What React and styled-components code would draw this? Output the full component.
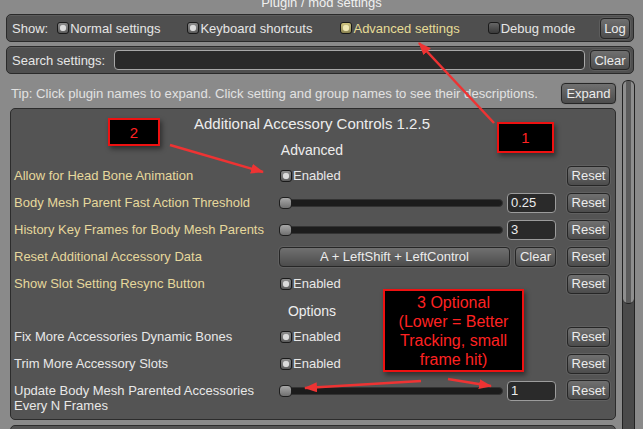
import React from "react";
import styled, { createGlobalStyle, css } from "styled-components";

const GlobalStyle = createGlobalStyle`
  html, body {
    margin: 0;
    padding: 0;
    background: #8a8a8a;
  }
  body {
    font-family: "Liberation Sans", Arial, sans-serif;
    font-size: 13px;
    color: #e6e6e6;
  }
  #root {
    width: 643px;
    height: 429px;
    overflow: hidden;
  }
`;

const Window = styled.div`
  position: relative;
  width: 643px;
  height: 429px;
  overflow: hidden;
  background: #8a8a8a;
  display: flex;
  flex-direction: column;
`;

const WindowTitle = styled.div`
  height: 14px;
  line-height: 14px;
  margin-top: -4px;
  text-align: center;
  color: #f0f0f0;
`;

const Bar = styled.div`
  height: 26px;
  margin: 4px 9px 0 6px;
  padding: 0 3px 0 5px;
  display: flex;
  align-items: center;
  background: #4f4f4f;
  border: 1px solid #2a2a2a;
  border-radius: 5px;
  box-shadow: inset 0 1px 0 #5c5c5c;
`;

const BarLabel = styled.span`
  margin-right: ${(p) => p.$gap || 0}px;
  white-space: nowrap;
`;

const ToggleItem = styled.label`
  display: flex;
  align-items: center;
  margin-right: ${(p) => p.$gap || 0}px;
  color: ${(p) => (p.$active ? "#e6dc96" : "#e6e6e6")};
  white-space: nowrap;
`;

const Toggle = styled.span`
  width: 10px;
  height: 10px;
  margin-right: 1px;
  border: 1px solid #1a1a1a;
  border-radius: 3px;
  display: flex;
  align-items: center;
  justify-content: center;
  background: linear-gradient(#8c8c8c, #5a5a5a);
  ${(p) =>
    p.$variant === "yellow" &&
    css`
      background: linear-gradient(#cfc37e, #8a8250);
    `}
  ${(p) =>
    p.$variant === "off" &&
    css`
      background: linear-gradient(#666, #3a3a3a);
    `}
  &::after {
    content: "";
    width: 6px;
    height: 6px;
    border-radius: 50%;
    display: ${(p) => (p.$variant === "off" ? "none" : "block")};
    background: ${(p) => (p.$variant === "yellow" ? "#f0e8b4" : "#dcdcdc")};
    box-shadow: 0 0 1px rgba(255, 255, 255, 0.6);
  }
`;

const Spacer = styled.div`
  flex: 1;
`;

const Button = styled.button`
  height: ${(p) => p.$h || 20}px;
  width: ${(p) => (p.$w ? `${p.$w}px` : "auto")};
  flex: ${(p) => (p.$grow ? 1 : "none")};
  padding: 0;
  font-family: "Liberation Sans", Arial, sans-serif;
  font-size: 13px;
  color: #ececec;
  background: linear-gradient(#707070, #4c4c4c);
  border: 1px solid #262626;
  border-radius: 4px;
  box-shadow: 0 0 0 1px rgba(120, 120, 120, 0.35);
  display: flex;
  align-items: center;
  justify-content: center;
`;

const SearchInput = styled.div`
  flex: 1;
  height: 18px;
  margin: 0 5px 0 9px;
  background: #2a2a2a;
  border: 1px solid #a8a8a8;
  border-radius: 4px;
`;

const Body = styled.div`
  flex: 1;
  min-height: 0;
  margin: 6px 8px 0 10px;
  display: flex;
  gap: 6px;
`;

const Content = styled.div`
  flex: 1;
  display: flex;
  flex-direction: column;
`;

const TipRow = styled.div`
  height: 21px;
  margin-top: 3px;
  padding-left: 1px;
  display: flex;
  align-items: center;
  justify-content: space-between;
  color: #e2e2e2;
  font-size: 13.15px;
`;

const Panel = styled.div`
  margin-top: ${(p) => p.$top || 4}px;
  padding: 7px 5px 6px 3px;
  background: #545454;
  border: 1px solid #2c2c2c;
  border-radius: 5px;
  display: flex;
  flex-direction: column;
  flex: none;
  min-height: ${(p) => p.$min || 0}px;
`;

const PluginTitle = styled.div`
  height: 16px;
  line-height: 16px;
  font-size: 15px;
  text-align: center;
  color: #ededed;
  margin-bottom: 10px;
`;

const Section = styled.div`
  display: flex;
  flex-direction: column;
  gap: 6px;
  margin-top: ${(p) => p.$top || 0}px;
`;

const SectionHeader = styled.div`
  height: 16px;
  line-height: 16px;
  font-size: 14px;
  text-align: center;
  color: #ededed;
  margin-bottom: 1px;
`;

const Row = styled.div`
  display: grid;
  grid-template-columns: 265px 1fr 43px;
  align-items: ${(p) => (p.$top ? "start" : "center")};
  min-height: 21px;
`;

const Label = styled.div`
  color: ${(p) => (p.$advanced ? "#e6d89c" : "#e8e8e8")};
  line-height: 15px;
  padding-top: ${(p) => (p.$top ? 3 : 0)}px;
`;

const Control = styled.div`
  display: flex;
  align-items: center;
  gap: ${(p) => p.$gap || 4}px;
  margin-right: 11px;
  height: 21px;
`;

const EnabledToggle = styled.label`
  display: flex;
  align-items: center;
  padding-left: 1px;
  color: #e8e8e8;
`;

const Slider = styled.div`
  flex: 1;
  height: 6px;
  background: #1c1c1c;
  border: 1px solid #333;
  border-radius: 4px;
  display: flex;
  align-items: center;
`;

const Thumb = styled.span`
  width: 11px;
  height: 10px;
  margin-left: -1px;
  border: 1px solid #1e1e1e;
  border-radius: 4px;
  background: linear-gradient(#a8a8a8, #707070);
`;

const NumberInput = styled.div`
  width: 44px;
  height: 18px;
  padding-left: 3px;
  line-height: 18px;
  background: #2a2a2a;
  border: 1px solid #9c9c9c;
  border-radius: 4px;
  color: #ececec;
`;

const Scrollbar = styled.div`
  width: 13px;
  flex: none;
  background: #4a4a4a;
  border: 1px solid #222;
  border-bottom: none;
  border-radius: 6px 6px 0 0;
  box-sizing: border-box;
  display: flex;
  flex-direction: column;
`;

const ScrollThumb = styled.div`
  height: ${(p) => p.$h}px;
  border-radius: 5px;
  border-bottom: 1px solid #222;
  background: linear-gradient(
    to right,
    #8e8e8e 0 28%,
    #5c5c5c 28% 72%,
    #8e8e8e 72%
  );
`;

const Overlay = styled.svg`
  position: absolute;
  left: 0;
  top: 0;
  pointer-events: none;
`;

const Note = styled.div`
  position: absolute;
  left: ${(p) => p.$x}px;
  top: ${(p) => p.$y}px;
  width: ${(p) => p.$w}px;
  height: ${(p) => p.$h}px;
  box-sizing: border-box;
  background: #000;
  border: 2px solid #ee1111;
  box-shadow: 2px 3px 5px rgba(0, 0, 0, 0.45);
  color: #ff2222;
  font-size: ${(p) => (p.$multi ? 16 : 15)}px;
  line-height: 19px;
  text-align: center;
  display: flex;
  flex-direction: column;
  justify-content: ${(p) => (p.$multi ? "flex-start" : "center")};
  padding-top: ${(p) => (p.$multi ? 2 : 0)}px;
  white-space: nowrap;
`;

const advancedRows = [
  { label: "Allow for Head Bone Animation", kind: "toggle" },
  { label: "Body Mesh Parent Fast Action Threshold", kind: "slider", value: "0.25" },
  { label: "History Key Frames for Body Mesh Parents", kind: "slider", value: "3" },
  { label: "Reset Additional Accessory Data", kind: "key", value: "A + LeftShift + LeftControl" },
  { label: "Show Slot Setting Resync Button", kind: "toggle" },
];

const optionRows = [
  { label: "Fix More Accessories Dynamic Bones", kind: "toggle" },
  { label: "Trim More Accessory Slots", kind: "toggle" },
  {
    label: "Update Body Mesh Parented Accessories Every N Frames",
    kind: "slider",
    value: "1",
    tall: true,
  },
];

const SettingControl = ({ row }) => {
  if (row.kind === "toggle") {
    return (
      <Control>
        <EnabledToggle>
          <Toggle />
          Enabled
        </EnabledToggle>
      </Control>
    );
  }
  if (row.kind === "slider") {
    return (
      <Control $gap={4}>
        <Slider>
          <Thumb />
        </Slider>
        <NumberInput>{row.value}</NumberInput>
      </Control>
    );
  }
  return (
    <Control $gap={5}>
      <Button $grow>{row.value}</Button>
      <Button $w={41}>Clear</Button>
    </Control>
  );
};

const SettingRow = ({ row, advanced }) => (
  <Row $top={row.tall}>
    <Label $advanced={advanced} $top={row.tall}>
      {row.tall ? (
        <>
          Update Body Mesh Parented Accessories
          <br />
          Every N Frames
        </>
      ) : (
        row.label
      )}
    </Label>
    <SettingControl row={row} />
    <Button $w={43}>Reset</Button>
  </Row>
);

const Arrow = ({ x1, y1, x2, y2 }) => (
  <line
    x1={x1}
    y1={y1}
    x2={x2}
    y2={y2}
    stroke="#ee3333"
    strokeWidth="2.5"
    markerEnd="url(#head)"
  />
);

const App = () => (
  <Window>
    <GlobalStyle />
    <WindowTitle>Plugin / mod settings</WindowTitle>

    <Bar>
      <BarLabel $gap={9}>Show:</BarLabel>
      <ToggleItem $gap={27}>
        <Toggle />
        Normal settings
      </ToggleItem>
      <ToggleItem $gap={28}>
        <Toggle />
        Keyboard shortcuts
      </ToggleItem>
      <ToggleItem $gap={28} $active>
        <Toggle $variant="yellow" />
        Advanced settings
      </ToggleItem>
      <ToggleItem>
        <Toggle $variant="off" />
        Debug mode
      </ToggleItem>
      <Spacer />
      <Button $w={30} $h={21}>
        Log
      </Button>
    </Bar>

    <Bar>
      <BarLabel>Search settings:</BarLabel>
      <SearchInput />
      <Button $w={40} $h={20}>
        Clear
      </Button>
    </Bar>

    <Body>
      <Content>
        <TipRow>
          <span>
            Tip: Click plugin names to expand. Click setting and group names to see their
            descriptions.
          </span>
          <Button $w={55} $h={21}>
            Expand
          </Button>
        </TipRow>
        <Panel>
          <PluginTitle>Additional Accessory Controls 1.2.5</PluginTitle>
          <Section>
            <SectionHeader>Advanced</SectionHeader>
            {advancedRows.map((r) => (
              <SettingRow key={r.label} row={r} advanced />
            ))}
          </Section>
          <Section $top={9}>
            <SectionHeader>Options</SectionHeader>
            {optionRows.map((r) => (
              <SettingRow key={r.label} row={r} />
            ))}
          </Section>
        </Panel>
        <Panel $top={5} $min={20} />
      </Content>
      <Scrollbar>
        <ScrollThumb $h={222} />
      </Scrollbar>
    </Body>

    <Overlay width="643" height="429" viewBox="0 0 643 429">
      <defs>
        <marker
          id="head"
          markerUnits="userSpaceOnUse"
          markerWidth="14"
          markerHeight="12"
          refX="12"
          refY="5"
          orient="auto"
        >
          <path d="M0,0 L13,5 L0,10 z" fill="#ee3333" />
        </marker>
      </defs>
      <Arrow x1={494} y1={123} x2={419} y2={43} />
      <Arrow x1={170} y1={145} x2={263} y2={172} />
      <Arrow x1={421} y1={381} x2={305} y2={388} />
      <Arrow x1={448} y1={379} x2={491} y2={386} />
    </Overlay>

    <Note $x={497} $y={122} $w={57} $h={31}>
      1
    </Note>
    <Note $x={108} $y={118} $w={52} $h={28}>
      2
    </Note>
    <Note $x={383} $y={289} $w={141} $h={83} $multi>
      <span>3 Optional</span>
      <span>(Lower = Better</span>
      <span>Tracking, small</span>
      <span>frame hit)</span>
    </Note>
  </Window>
);

export default App;
